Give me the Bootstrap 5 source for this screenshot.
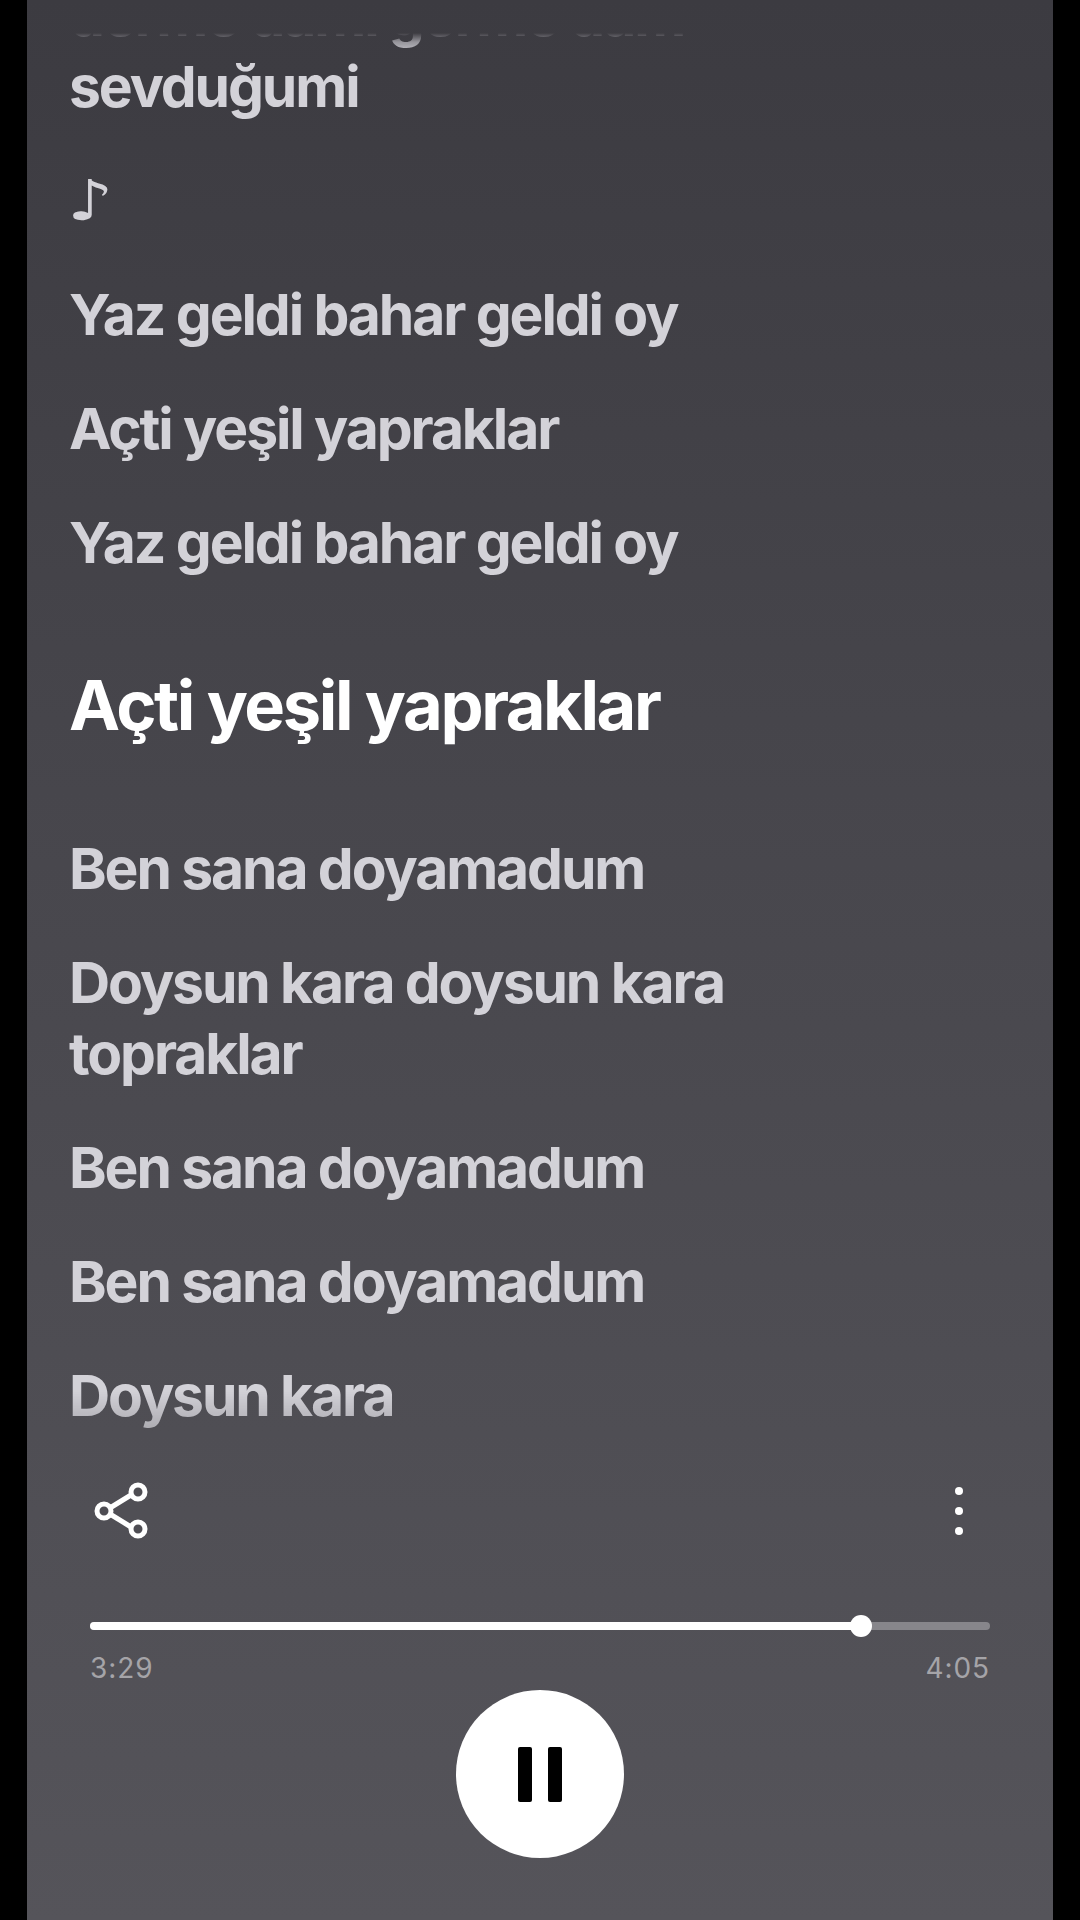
<!doctype html>
<html lang="tr">
<head>
<meta charset="utf-8">
<title>Şarkı sözleri</title>
<link href="https://cdn.jsdelivr.net/npm/bootstrap@5.3.0/dist/css/bootstrap.min.css" rel="stylesheet">
<style>
html,body{height:100%;background:#000;}
body{font-family:Inter,"Liberation Sans",sans-serif;}
.screen{width:1026px;height:1920px;background:linear-gradient(180deg,#3c3b41 0%,#48474d 45%,#55545a 100%);}
.lyrics-clip{height:1466px;padding:0 42px;-webkit-mask-image:linear-gradient(180deg,transparent 0,transparent 33px,rgba(0,0,0,.2) 36px,rgba(0,0,0,.6) 42px,#000 56px,#000 1390px,rgba(0,0,0,.7) 1431px,transparent 1432px);mask-image:linear-gradient(180deg,transparent 0,transparent 33px,rgba(0,0,0,.2) 36px,rgba(0,0,0,.6) 42px,#000 56px,#000 1390px,rgba(0,0,0,.7) 1431px,transparent 1432px);}
.lyrics-list{margin-top:-20px;gap:43px;}
.lyric-line{font-size:57px;line-height:71px;font-weight:700;letter-spacing:-2.1px;color:#d3d2d8;max-width:720px;}
.lyric-clipped{white-space:nowrap;max-width:none;}
.lyric-note{font-family:"DejaVu Sans",sans-serif;letter-spacing:0;font-weight:400;font-size:56px;}
.note-glyph{display:inline-block;transform:scaleX(1.3);transform-origin:left center;margin-left:-2px;}
.lyric-now{font-size:68.5px;letter-spacing:-2.4px;color:#fff;margin:49px 0 49px;max-width:none;}
.tool-row{height:90px;padding:0 89px 0 64px;}
.track-wrap{margin:0 63px;padding-top:66px;}
.track-bar{height:8px;background:#87868b;border-radius:4px;overflow:visible;}
.track-bar .progress-bar{background:#fff;border-radius:4px;}
.track-knob{width:22px;height:22px;background:#fff;top:-7px;transform:translateX(-11px);}
.time-row{margin-top:22px;font-size:28px;line-height:32px;color:#a5a4a8;letter-spacing:.9px;}
.play-btn{width:168px;height:168px;background:#fff;border:0;padding:0;margin-top:6px;}
.play-btn:hover,.play-btn:active{background:#fff!important;}
.pause-mark{width:14px;height:55px;background:#000;border-radius:2px;}
</style>
</head>
<body class="d-flex justify-content-center">
<main class="screen d-flex flex-column">
  <section class="lyrics-clip overflow-hidden">
    <div class="lyrics-list d-flex flex-column">
      <div class="lyric-line lyric-clipped">derme dami germe dam<br>sevduğumi</div>
      <div class="lyric-line lyric-note"><span class="note-glyph">♪</span></div>
      <div class="lyric-line">Yaz geldi bahar geldi oy</div>
      <div class="lyric-line">Açti yeşil yapraklar</div>
      <div class="lyric-line">Yaz geldi bahar geldi oy</div>
      <div class="lyric-line lyric-now">Açti yeşil yapraklar</div>
      <div class="lyric-line">Ben sana doyamadum</div>
      <div class="lyric-line">Doysun kara doysun kara topraklar</div>
      <div class="lyric-line">Ben sana doyamadum</div>
      <div class="lyric-line">Ben sana doyamadum</div>
      <div class="lyric-line">Doysun kara</div>
    </div>
  </section>
  <div class="tool-row d-flex justify-content-between align-items-center">
    <svg width="60" height="58" viewBox="0 0 60 58" fill="none" stroke="#fff" stroke-width="5" aria-label="Paylaş">
      <line x1="14" y1="29" x2="40" y2="13"/><line x1="14" y1="29" x2="40" y2="45"/>
      <circle cx="47" cy="10" r="7" fill="#4e4d53"/><circle cx="13" cy="29" r="7" fill="#4e4d53"/><circle cx="47" cy="47" r="7" fill="#4e4d53"/>
    </svg>
    <svg width="10" height="50" viewBox="0 0 10 50" fill="#fff" aria-label="Daha fazla">
      <circle cx="5" cy="5" r="4"/><circle cx="5" cy="25" r="4"/><circle cx="5" cy="45" r="4"/>
    </svg>
  </div>
  <div class="track-wrap">
    <div class="progress track-bar position-relative">
      <div class="progress-bar" style="width:85.7%"></div>
      <div class="track-knob rounded-circle position-absolute" style="left:85.7%"></div>
    </div>
    <div class="time-row d-flex justify-content-between"><span>3:29</span><span>4:05</span></div>
  </div>
  <div class="d-flex justify-content-center">
    <button class="play-btn btn rounded-circle d-flex justify-content-center align-items-center gap-3" aria-label="Duraklat">
      <span class="pause-mark"></span><span class="pause-mark"></span>
    </button>
  </div>
</main>
<script src="https://cdn.jsdelivr.net/npm/bootstrap@5.3.0/dist/js/bootstrap.bundle.min.js"></script>
</body>
</html>
